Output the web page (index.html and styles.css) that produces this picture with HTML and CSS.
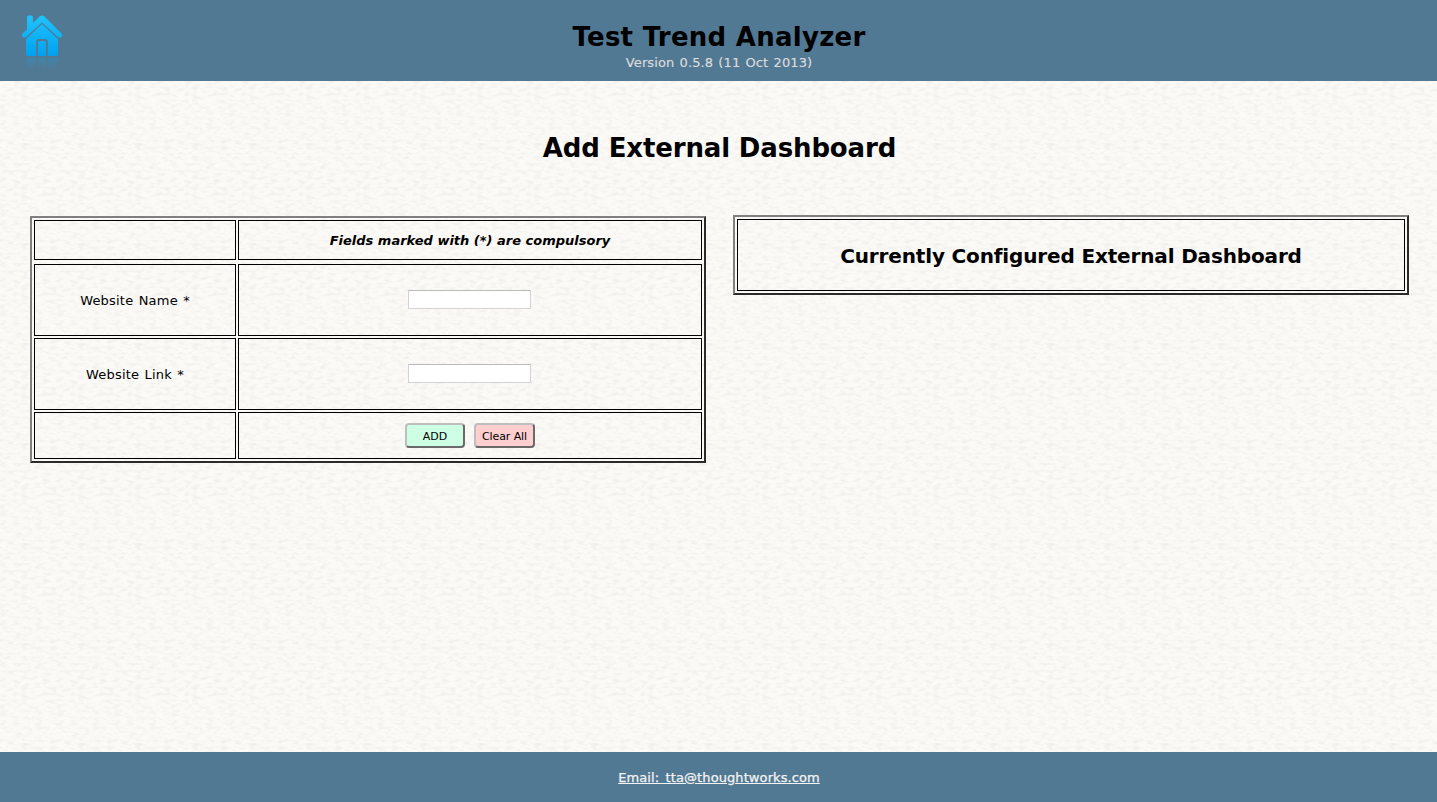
FILE: index.html
```html
<!DOCTYPE html>
<html lang="en">
<head>
<meta charset="utf-8">
<title>Test Trend Analyzer</title>
<link rel="stylesheet" href="styles.css">
</head>
<body>
<header class="header">
  <a class="home" aria-label="Home">
    <svg width="44" height="56" viewBox="0 0 44 56">
      <defs>
        <linearGradient id="blue" gradientUnits="userSpaceOnUse" x1="0" y1="2" x2="0" y2="42"><stop offset="0" stop-color="#20c2fc"/><stop offset="1" stop-color="#00a2f0"/></linearGradient>
        <linearGradient id="fade" x1="0" y1="0" x2="0" y2="1"><stop offset="0" stop-color="#2794c4" stop-opacity=".45"/><stop offset="1" stop-color="#2794c4" stop-opacity="0"/></linearGradient>
      </defs>
      <g fill="url(#blue)">
        <path d="M7 15.500V3.500q0-2 2-2h2q2 0 2 2v5.500l6.500-6.500q2.500-2 5 0L41.500 19.500q1.500 2 0 3.500t-3.500 0L22 8.500 6 23q-2 1.500-3.500 0t0-3.500z"/>
        <path d="M6 25 22 10 38 25v15q0 2-2 2h-8V28q0-3-3-3h-6q-3 0-3 3v14H8q-2 0-2-2z"/>
        <path d="M18 42V28.500q0-1.500 1.500-1.500h5q1.500 0 1.500 1.500V42z"/>
      </g>
      <path fill="url(#fade)" d="M6 45q0-1 2-1h8v11H6zM18 44h8v11h-8zM28 44h8q2 0 2 1v10H28z"/>
    </svg>
  </a>
  <h1 class="title">Test Trend Analyzer</h1>
  <p class="version">Version 0.5.8 (11 Oct 2013)</p>
</header>
<main class="main">
  <h2 class="page-title">Add External Dashboard</h2>
  <div class="columns">
    <form class="frame form">
      <div class="cell"></div>
      <div class="cell note">Fields marked with (*) are compulsory</div>
      <div class="spacer"></div>
      <label class="cell label" for="name">Website Name *</label>
      <div class="cell field-cell"><input class="field" id="name" type="text"></div>
      <label class="cell label" for="link">Website Link *</label>
      <div class="cell field-cell"><input class="field" id="link" type="text"></div>
      <div class="cell"></div>
      <div class="cell actions"><button class="button add" type="button">ADD</button><button class="button clear" type="reset">Clear All</button></div>
    </form>
    <section class="frame configured">
      <h3 class="cell configured-title">Currently Configured External Dashboard</h3>
    </section>
  </div>
</main>
<footer class="footer"><a class="email" href="mailto:tta@thoughtworks.com">Email: tta@thoughtworks.com</a></footer>
</body>
</html>
```
FILE: styles.css
```css
* { box-sizing: border-box; }
body {
  margin: 0;
  height: 802px;
  display: flex;
  flex-direction: column;
  overflow: hidden;
  color: #000;
  font: 13px/16px Verdana, "DejaVu Sans", sans-serif;
  background: #fbfaf7 url("data:image/svg+xml,%3Csvg xmlns='http://www.w3.org/2000/svg' width='57' height='100'%3E%3Cfilter id='n' x='0' y='0' width='100%25' height='100%25' color-interpolation-filters='sRGB'%3E%3CfeTurbulence type='fractalNoise' baseFrequency='.14 .3' numOctaves='2' seed='7' stitchTiles='stitch'/%3E%3CfeColorMatrix values='0 0 0 0 .72 0 0 0 0 .71 0 0 0 0 .69 .42 0 0 0 -.19'/%3E%3C/filter%3E%3Crect width='57' height='100' filter='url(%23n)'/%3E%3C/svg%3E");
}
h1, h2, h3, p { margin: 0; }
.header {
  position: relative;
  height: 81px;
  padding: 21px 0 0 1px;
  text-align: center;
  background: #527993;
}
.home { position: absolute; left: 20px; top: 14px; }
.home svg { display: block; }
.title { font-size: 26px; line-height: 32px; letter-spacing: .27px; }
.version { color: #dcdcdc; line-height: 20px; letter-spacing: .1px; word-spacing: 1px; -webkit-text-stroke: .15px #dcdcdc; }
.main { flex: 1; padding: 50px 28px 0 30px; }
.page-title { font-size: 26px; line-height: 34px; text-align: center; letter-spacing: -.14px; }
.columns { display: flex; align-items: flex-start; justify-content: space-between; padding-top: 50px; }
.frame {
  display: grid;
  width: 676px;
  gap: 2px;
  padding: 2px;
  border: 2px solid;
  border-color: #808080 #2c2a2a #2c2a2a #808080;
}
.form { margin-top: 1px; grid-template: 40px 0 72px 72px 47px / 202px 464px; }
.spacer { grid-column: 1 / -1; }
.cell { display: flex; align-items: center; justify-content: center; border: 1px solid #000; }
.label { padding-top: 2px; letter-spacing: .2px; word-spacing: 1px; }
.note { padding-top: 2px; font-weight: bold; font-style: italic; }
.field-cell { padding: 0 2px 2px 0; }
.field {
  width: 123px;
  height: 19px;
  margin: 0;
  padding: 1px;
  border: 1px solid #d3d3d6;
  border-top-color: #bababa;
  background: #fff;
}
.actions { gap: 9px; }
.button {
  height: 25px;
  padding: 2px 0 0;
  color: #000;
  font: 11px "Lucida Grande", "DejaVu Sans", sans-serif;
  border: 2px solid;
  border-color: #bebebe #6b6868 #6b6868 #bebebe;
  border-radius: 4px;
  white-space: nowrap;
}
.add { width: 60px; background: #ccffe3; }
.clear { width: 61px; background: #ffcfd0; letter-spacing: -.1px; }
.configured { height: 80px; }
.configured-title { padding-top: 2px; font-size: 20px; letter-spacing: -.15px; }
.footer { height: 50px; padding: 2px 0 0 1px; display: flex; align-items: center; justify-content: center; background: #527993; }
.email { color: #f4f4f4; letter-spacing: .09px; word-spacing: 2.2px; -webkit-text-stroke: .25px #f4f4f4; }
```
